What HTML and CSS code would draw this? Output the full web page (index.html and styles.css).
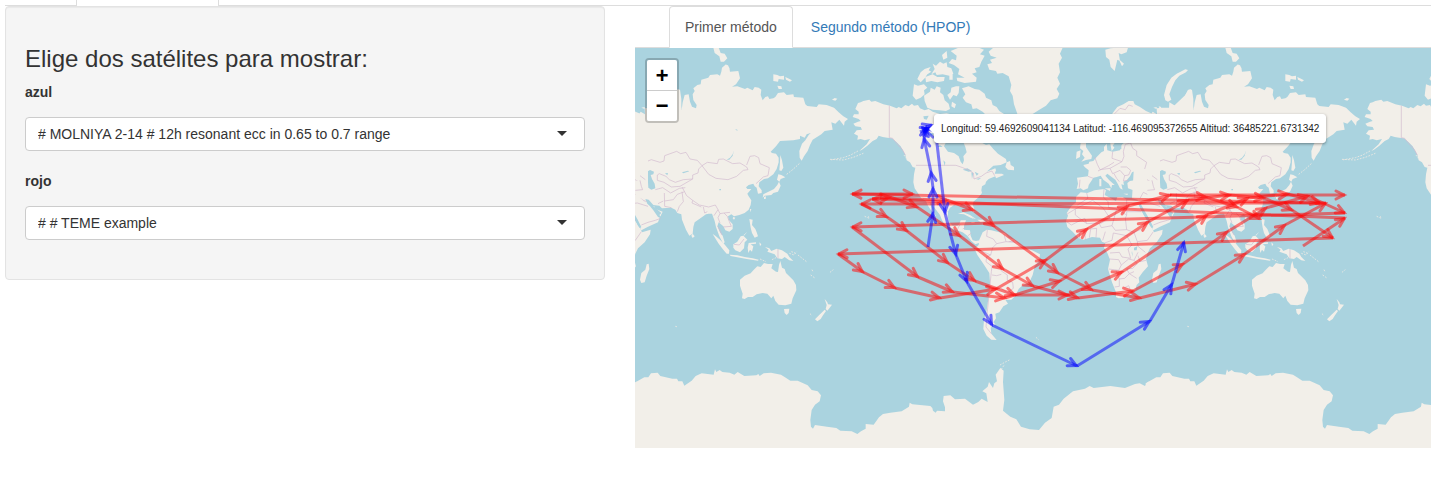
FILE: index.html
```html
<!DOCTYPE html>
<html lang="es">
<head>
<meta charset="utf-8">
<meta name="viewport" content="width=device-width, initial-scale=1">
<title>Satélites</title>
<link rel="stylesheet" href="styles.css">
</head>
<body>
<div class="page">
  <div class="top-tabs"><div class="top-tab"></div></div>
  <main class="layout">
    <form class="well">
      <h3 class="title">Elige dos satélites para mostrar:</h3>
      <div class="field">
        <label for="azul">azul</label>
        <div class="select-box"><select id="azul"><option># MOLNIYA 2-14 # 12h resonant ecc in 0.65 to 0.7 range</option></select></div>
      </div>
      <div class="field">
        <label for="rojo">rojo</label>
        <div class="select-box"><select id="rojo"><option># # TEME example</option></select></div>
      </div>
    </form>
    <section class="viewer">
      <nav class="tabs">
        <a class="tab active" href="#primer">Primer método</a>
        <a class="tab" href="#segundo">Segundo método (HPOP)</a>
      </nav>
      <div class="map" id="primer">
        <svg class="map-canvas" viewBox="635 48 796 400" preserveAspectRatio="xMinYMin slice" aria-hidden="true">
          <defs>
            <marker id="head-red" class="head red" markerUnits="userSpaceOnUse" markerWidth="16" markerHeight="16" refX="12" refY="8" orient="auto"><path d="M3 4L11 8 3 12"/></marker>
            <marker id="head-blue" class="head blue" markerUnits="userSpaceOnUse" markerWidth="16" markerHeight="16" refX="12" refY="8" orient="auto"><path d="M3 4L11 8 3 12"/></marker>
            <g id="world">
              <!-- Asia and Oceania -->
              <g transform="translate(1142 45) scale(.33333)">
                <path class="land" d="M-30 215L0 218 18 205 22 215 32 200 45 208 44 190 60 188 90 188 130 150 140 135 146 132 150 165 155 195 158 172 164 150 176 148 180 170 186 185 198 190 200 180 190 165 188 148 194 138 190 130 202 120 212 118 214 104 235 98 240 90 262 88 270 92 274 80 276 68 288 58 298 68 300 80 325 78 330 100 318 118 306 125 322 124 345 132 352 128 368 136 374 126 386 128 394 134 392 150 398 166 406 156 414 154 418 162 430 160 436 156 444 144 462 142 470 150 490 148 492 156 520 158 526 178 532 183 560 186 566 178 590 180 612 188 626 202 640 214 654 222 644 230 642 242 628 224 616 236 604 232 608 254 584 258 574 268 548 284 540 300 533 318 522 334 515 347 509 338 508 318 516 296 526 286 536 270 542 264 530 268 524 278 510 272 510 282 490 286 450 288 438 304 422 320 426 324 438 326 446 338 446 352 440 372 430 388 414 400 402 402 388 412 386 424 395 436 395 444 384 446 380 428 374 424 370 416 356 420 348 427 352 432 364 432 352 446 356 454 364 466 362 480 356 494 344 504 328 510 312 514 304 508 294 514 296 524 308 538 308 552 298 560 286 556 280 544 266 532 262 544 270 562 278 572 284 592 280 596 268 574 258 546 254 528 246 506 236 506 228 508 208 522 194 532 190 546 188 566 178 572 168 554 156 524 154 508 142 504 136 494 124 488 96 490 88 482 70 480 56 464 46 462 52 476 66 490 72 482 76 492 98 500 90 516 72 528 50 540 32 550 28 532 16 508 4 482-8 466-30 460-20 300Z"/>
                <path class="land" d="M250 8H266L272 24 284 26 292 40 282 50 272 50 268 34 254 24ZM282 64L294 60 298 72 284 74ZM430 88L442 90 450 94 462 92 462 104 446 102 444 110 430 108ZM466 96L474 100 486 106 480 110 468 104ZM442 122L454 124 456 132 446 132ZM606 164L614 159 622 161 616 167ZM451 330L456 346 460 368 454 378 448 376 450 350ZM445 388L454 390 466 397 452 402 448 410 441 404ZM447 410L452 422 444 440 430 444 424 450 404 452 398 458 400 448 420 438 432 432 442 420ZM402 456L408 454 407 462 402 462ZM188 566L194 574 188 579 184 572ZM360 492L364 492 361 502ZM310 516L316 518 312 524 308 520ZM358 522L368 524 366 540 376 552 380 562 384 574 374 578 366 564 362 548ZM352 560L342 572 341 570ZM248 567L256 572 270 584 282 596 298 616 297 626 290 626 278 612 266 596ZM299 629L322 631 344 636 368 640 386 644 384 647 350 642 302 633ZM310 598L322 590 332 574 340 572 352 584 344 592 342 610 330 622 316 616 310 608ZM356 594L378 592 378 596 362 598 370 604 366 620 360 614 355 624 353 608ZM405 606L418 610 424 618 440 611 456 616 472 626 478 636 490 648 478 646 464 636 456 642 442 640 434 628 412 620 416 614ZM388 592L394 598 390 604Z"/>
                <path class="land" d="M330 704L344 692 362 685 370 676 382 664 392 666 402 654 414 657 428 657 424 670 438 680 444 681 447 660 451 648 456 668 464 672 468 684 478 694 490 706 498 720 499 736 488 760 484 776 466 781 446 779 436 768 430 752 424 760 412 746 398 744 380 748 368 756 354 756 344 762 336 760 338 746 330 722ZM462 792L478 791 476 804 470 810 464 804ZM584 762L592 772 594 778 606 779 598 790 592 797 587 792 590 780ZM584 794L588 798 578 812 572 822 562 829 555 823 570 808Z"/>
                <path class="isle" d="M478 625L492 630 500 620M484 620L496 624M504 630L532 652M542 690L556 700M546 674L550 682M600 682L610 674M390 642L408 650M426 644L438 638M470 388L488 374 510 354M600 343L640 345 670 337 700 325M714 514L720 520M136 844L144 846M540 806L546 812"/>
                <path class="water" d="M50 381L60 375 72 380 70 388 62 390 66 402 74 416 76 430 64 434 55 428 54 412 46 400ZM290 344L300 338 308 328 312 316 308 332 298 344ZM156 382L174 377 178 379 160 385ZM105 385L114 384 112 391ZM315 252L322 254 322 258ZM268 432H273V436H268Z"/>
                <path class="border" d="M44 368L44 352 64 344 90 352 102 348 104 332 140 319 152 326 168 322 180 342 202 346 216 362 206 372 204 384 188 390 188 402 160 404 136 412 118 404 108 394 88 386 82 390 82 406 102 412 124 426 150 424 188 402M216 362L232 352 262 356 266 343 280 342 308 356 330 354 350 366 354 374 340 376 320 394 294 404 258 400 236 388 216 362M350 360L360 334 374 332 386 338 390 356 418 368 414 392 400 396 378 416M76 434L98 428 122 444 148 430 166 428M103 444L104 484 124 488M104 468L130 464 142 448 164 440M142 500L148 484 160 470 156 440M156 426L170 452 188 466 208 480 236 486 256 480 264 494 252 512M188 466L186 474 214 486M220 486L224 504 232 500M264 494L270 506 282 504 292 514 298 530 304 544 280 546M270 506L264 518 270 534M282 504L300 502M15 440L34 462 44 472M15 404L30 412 44 418M15 432L28 428 36 410M28 534L48 526 76 520 82 508M30 462L50 470M84 476L100 468M444 612V640M312 598L328 600 342 582M264 544L276 570"/>
              </g>
              <!-- Europe and Africa -->
              <g transform="translate(1060 45) scale(.33333)">
                <path class="land" d="M152 220L158 204 172 186 190 178 206 168 220 168 224 178 240 186 258 198 290 212 300 220V460L262 458 258 434 244 430 232 438 216 434 204 430 202 414 210 408 224 406 240 404 256 408 276 406 266 394 252 388 244 384 234 388 226 378 216 382 210 394 200 406 190 410 192 420 184 418 188 434 180 430 174 418 166 404 150 392 142 386 136 392 148 406 164 420 156 420 154 430 146 416 130 404 122 392 110 396 100 398 94 408 86 420 84 430 70 436 62 430 50 432 54 416 51 398 84 394 86 376 74 366 70 360 86 356 88 350 100 348 110 336 124 322 132 318 132 306 140 296 142 316 158 320 180 316 184 300 196 290 140 280ZM155 318L150 290H176L162 310ZM280 188L290 186 290 192ZM296 184L304 186 300 194Z"/>
                <path class="land" d="M316 166L312 150 320 120 334 98 350 86 376 73 384 75 378 82 358 92 346 106 336 126 328 148 334 164 324 170ZM136 14L152 10 170 8 204 8 200 22 184 28 176 24 180 48 172 44 164 78 152 66 148 44 138 36ZM176 42L192 56 186 64ZM328 172L348 184 352 190 372 196 376 207H326ZM374 190L376 150 384 134 396 134 400 162 400 207H376ZM62 294H78L78 306 86 318 96 332 94 342 78 345 64 350 74 338 66 328 70 318 60 310ZM50 320L62 316 60 336 48 342ZM134 430L152 430 150 438ZM118 402H124V424H118ZM190 446H204L202 450ZM236 440L246 442 238 446Z"/>
                <path class="land" d="M62 442L82 444 104 436 132 432 138 436 134 450 150 458 168 468 172 456 188 456 200 464 222 466 236 468 242 476 240 488 250 506 262 524 270 542 278 552 282 562 308 554 306 568 290 592 270 610 262 626 258 642 264 664 248 682 236 698 238 712 230 720 226 734 210 750 192 758 176 760 168 756 168 742 156 712 144 672 150 644 142 624 132 608 136 594 126 590 120 578 96 576 70 584 56 580 38 560 22 546 18 528 24 512 20 504 34 484 48 472 48 456ZM296 658L302 656 304 672 296 692 290 712 280 714 276 704 280 684 292 674Z"/>
                <path class="land" d="M232 464L260 450 278 460 300 480 340 505 330 532 300 545 280 556 272 540 262 524 252 506Z"/>
                <path class="water" d="M222 608L232 604 230 616 222 616ZM216 618L219 636 215 624ZM158 302L164 294H184L184 312 170 314ZM340 504L334 510 344 522 330 516 316 496 306 484 316 484ZM236 480L242 476 254 498 268 522 280 546 276 550 262 528 250 508Z"/>
                <path class="border" d="M164 206L180 190 196 194 206 180 218 184M190 320L196 298 212 294 218 310 230 318 230 332 260 352 254 372M158 320L156 340 186 350 192 334 190 320M104 336L112 358 120 374 150 370 186 350M84 394L100 400M60 404L58 428M150 370L158 386 180 376 194 392 206 390 212 376 200 366 182 366M114 378L146 362 162 352M162 386L170 400 178 410M194 392L190 408 206 406M276 406L280 424 284 434 262 436M276 392L292 404M20 508L46 492 46 510 80 536M46 492L98 466M80 444L84 460 52 480M98 466L130 490 150 520 124 534 80 536 74 520 34 540 20 530M132 432L130 456 144 470 146 488 170 492 200 510V500H244M200 464V500M170 492L162 520 156 542 124 548 118 536M156 542L166 556 200 554 196 520 200 510M200 554L222 562 246 552 262 524M134 594L156 586 160 564 200 572 222 562 232 590 262 586 280 560M58 580L60 560 74 556 76 584M88 578L92 552 110 550 108 578M136 560L128 586M200 572L216 600 204 612 212 640 186 636 178 622 150 624M232 590L234 604 256 622M148 642L176 644 184 660 176 676 146 672M184 660L206 642 222 646 232 656 218 670 200 672M222 646L234 622M234 632L240 650 258 646M168 676L178 702 194 700 208 686 230 700M178 702L178 724 164 726M200 672L208 686 222 680M194 728L206 722 210 732M240 460L250 442 262 448M250 476L268 474 300 484M280 540L300 532 322 526 338 520"/>
              </g>
              <!-- The Americas and Greenland -->
              <g transform="translate(830 45) scale(.33333)">
                <path class="land" d="M84 174L92 172 100 168 118 164 124 170 136 168 160 178 180 182 200 190 206 186 214 190 226 180 236 184 246 176 252 182 264 180 270 190 284 196 296 192 308 200 330 207 350 205 370 210 370 290 348 292 342 304 354 320 372 324 386 334 392 350 398 358 402 346 400 334 410 322 406 306 400 292 450 290 468 300 478 298 490 312 504 326 528 342 530 352 512 360 490 362 470 380 496 370 498 376 494 386 516 386 522 390 498 400 496 394 476 402 468 410 466 418 456 424 454 436 456 444 444 458 430 470 428 480 434 494 432 502 424 494 420 480 412 478 396 476 390 482 372 480 360 488 354 500 354 518 358 532 368 542 382 542 388 538 392 526 408 526 402 542 402 554 420 556 422 572 428 586 438 588 450 586 452 592 436 598 424 588 412 572 398 562 380 556 362 548 346 540 336 526 330 510 318 494 310 484 302 472 300 478 308 494 318 514 312 510 302 494 294 482 288 468 274 460 266 448 254 430 250 412 252 388 256 368 248 366 240 352 230 346 226 330 220 318 212 304 200 292 186 280 172 278 158 276 146 272 140 282 128 288 112 302 96 314 88 318 110 298 120 282 104 286 92 282 82 284 84 272 72 266 80 256 96 254 92 246 76 244 70 236 84 230 92 228 86 222 68 216 72 208 86 208 86 200 76 192Z"/>
                <path class="land" d="M526 366L530 352 540 348 542 360 552 366 552 376 534 374ZM384 506L400 502 420 510 438 522 422 518 402 508ZM442 524L458 524 466 530 452 532ZM424 531H434V534H424ZM470 529H478V532H470ZM482 32L476 20 490 8H698L690 26 696 38 686 56 690 82 682 98 690 116 680 132 688 146 682 160 662 166 648 182 628 194 608 207 600 240 580 250 564 212 552 178 548 152 540 138 544 120 536 94 518 84 502 86 498 78 478 74 472 58 486 54 480 44 500 38ZM362 18L386 8H446L462 14 450 28 464 32 454 50 448 66 434 70 440 82 426 86 440 98 438 110 404 114 382 108 380 98 404 98 384 88 388 72 372 60 356 54 366 42 378 46 380 32ZM308 56L318 62 330 50 340 56 350 52 352 66 364 70 370 86 358 92 338 88 320 90 316 82 304 88 314 72ZM262 102L272 82 284 72 302 66 296 76 304 80 292 88 284 100 272 112ZM286 96L308 88 322 96 344 96 342 108 322 112 304 108 288 112ZM252 118L264 122 282 118 292 128 282 136 284 148 272 158 258 164 248 152ZM284 168L282 152 300 140 302 128 314 134 320 124 332 128 330 142 340 150 344 166 356 176 360 192 348 198 328 196 308 194 292 188ZM358 84H368V104H358ZM364 128L378 124 388 124 386 144 380 154 370 150 360 164 352 150 362 142ZM366 170L378 178 374 190 364 184ZM396 130L416 124 434 132 448 134 464 146 468 158 484 166 488 180 500 186 508 198 522 207 500 218 470 212 458 200 440 190 428 192 424 178 408 172 398 158 406 148ZM336 30L350 18 352 38 340 44Z"/>
                <path class="land" d="M448 584L458 562 470 554 484 556 508 562 524 564 536 578 552 584 566 596 582 608 606 616 630 628 628 646 614 664 608 690 598 712 576 722 566 732 556 752 544 764 526 764 534 776 520 784 508 802 496 806 498 820 490 832 496 838 482 848 484 866 500 885 484 884 470 872 460 852 462 824 470 796 476 756 480 712 478 684 460 656 442 630 434 612 446 600Z"/>
                <path class="isle" d="M84 318L62 330 40 338 0 345M104 514L118 520M510 960L528 950 540 944M618 877L626 884M488 530L494 550M504 988L524 958M426 516L428 524M222 330L230 342"/>
                <path class="water" d="M398 374L412 370 426 378 416 380ZM424 382L430 384 426 402ZM434 380L446 386 440 392ZM438 402L454 398 446 404ZM322 306L330 300 338 306ZM340 346L346 352 344 364ZM296 266L320 262 304 272ZM280 214L296 212 290 224 282 222Z"/>
                <path class="border" d="M178 182V278L188 280 204 300 216 312 226 330M258 361H378L398 368 418 376 430 384 432 402 454 394 468 384 486 378 494 392M278 460L300 464 318 466 336 482 352 500M382 554L390 538M398 552L408 546M414 572L424 564M472 554L470 574 490 582 500 596 488 608 482 630 454 618 440 612M500 596L528 590 522 568M536 590L552 588M528 590L556 592M482 630L470 636 468 650 486 664 484 680 480 720 472 800 468 846 484 866M486 664L510 660 514 678 532 690 532 706 548 712 550 730 534 742M486 690L500 692 514 688M514 730L530 742 552 748"/>
              </g>
              <!-- Antarctica -->
              <g transform="translate(635 240) scale(.33333)">
                <path class="land" d="M-4 430L28 412 40 412 48 400 68 398 76 408 112 416 126 416 130 424 142 424 148 437 170 422 182 408 200 400 236 404 240 388 244 396 254 390 262 396 284 398 298 404 308 396 328 408 364 406 370 402 374 408 386 400 408 398 438 404 450 412 466 422 488 422 518 436 530 450 548 454 558 466 554 484 540 494 530 510 526 540 528 560 534 566 540 555 576 560 604 564 616 572 650 574 667 582 678 574 692 566 692 552 716 554 732 532 744 522 766 518 800 514 822 500 824 488 832 493 886 498 892 504 894 512 902 518 906 512 930 514 930 502 924 484 926 468 946 466 960 478 990 476 1014 494 1030 486 1040 476 1058 486 1054 460 1042 454 1058 440 1062 426 1074 444 1078 430 1086 424 1082 404 1096 384 1106 392 1104 426 1108 480 1104 512 1126 530 1144 538 1158 560 1184 568 1212 570 1230 548 1250 534 1256 500 1272 494 1286 476 1314 454 1350 446 1364 438 1376 444 1426 438 1470 444 1500 432 1514 430 1530 438 1540 424V630H-4Z"/>
              </g>
            </g>
          </defs>
          <rect class="sea" x="635" y="48" width="796" height="400"/>
          <use href="#world" x="-512"/><use href="#world"/><use href="#world" x="512"/>
          <g class="track red">
            <path d="M1303 246L1345 218"/><path d="M1345 218L872 199"/><path d="M872 199L890 197"/><path d="M890 197L917 207"/><path d="M917 207L960 236"/><path d="M960 236L1003 269"/><path d="M1003 269L1033 286"/><path d="M1033 286L1078 298"/><path d="M1078 298L1133 291"/><path d="M1133 291L1183 264"/><path d="M1183 264L1227 232"/><path d="M1227 232L1266 208"/><path d="M1266 208L1308 196"/><path d="M1308 196L1345 213"/>
            <path d="M1345 213L852 227"/><path d="M852 227L918 277"/><path d="M918 277L953 292"/><path d="M953 292L1005 298"/><path d="M1005 298L1060 281"/><path d="M1060 281L1148 222"/><path d="M1148 222L1188 200"/><path d="M1188 200L1230 195"/><path d="M1230 195L1264 198"/><path d="M1264 198L1292 210"/><path d="M1292 210L1333 238"/>
            <path d="M1333 238L838 254"/><path d="M838 254L863 272"/><path d="M863 272L895 288"/><path d="M895 288L940 298"/><path d="M940 298L996 289"/><path d="M996 289L1046 260"/><path d="M1046 260L1087 229"/><path d="M1087 229L1128 206"/><path d="M1128 206L1170 195"/><path d="M1170 195L1206 197"/><path d="M1206 197L1237 207"/><path d="M1237 207L1260 219"/>
            <path d="M1320 203L861 204"/><path d="M861 204L887 217"/><path d="M887 217L907 231"/><path d="M907 231L948 263"/><path d="M948 263L975 281"/><path d="M975 281L1015 295"/><path d="M1015 295L1068 295"/><path d="M1068 295L1122 272"/><path d="M1122 272L1207 215"/><path d="M1207 215L1248 198"/><path d="M1248 198L1288 194"/><path d="M1288 194L1320 203"/>
            <path d="M1326 203L852 194"/><path d="M852 194L913 194"/><path d="M880 198L947 200"/><path d="M947 200L973 210"/><path d="M973 210L994 226"/><path d="M994 226L1058 273"/><path d="M1058 273L1092 290"/><path d="M1092 290L1140 298"/><path d="M1140 298L1196 284"/><path d="M1196 284L1245 254"/><path d="M1245 254L1285 225"/><path d="M1285 225L1326 203"/><path d="M1170 195L1345 195"/>
          </g>
          <g class="track blue">
            <path d="M928 247L933 213"/><path d="M933 213L933 188"/><path d="M933 188L931 172"/><path d="M931 172L924 138"/><path d="M924 138L926 127"/><path d="M926 127L932 125"/><path d="M934 138L922 127"/><path d="M920 132L930 128"/><path d="M936 135L945 213"/><path d="M945 213L956 255"/><path d="M956 255L967 282"/><path d="M967 282L992 325"/><path d="M992 325L1077 366"/><path d="M1077 366L1150 321"/><path d="M1150 321L1172 284"/><path d="M1172 284L1184 242"/>
          </g>
        </svg>
        <div class="zoom-control">
          <button type="button" aria-label="Acercar">+</button>
          <button type="button" aria-label="Alejar">−</button>
        </div>
        <div class="tooltip" role="tooltip">Longitud: 59.4692609041134 Latitud: -116.469095372655 Altitud: 36485221.6731342</div>
      </div>
    </section>
  </main>
</div>
</body>
</html>
```
FILE: styles.css
```css
* { box-sizing: border-box; }
body {
  margin: 0;
  background: #fff;
  color: #333;
  font: 14px/20px "Liberation Sans", Arial, sans-serif;
}
.page { padding-left: 5px; }
.top-tabs {
  display: flex;
  height: 6px;
  padding-left: 71px;
  border-bottom: 1px solid #ddd;
}
.top-tab {
  width: 143px;
  height: 6px;
  background: #fff;
  border: solid #ddd;
  border-width: 0 1px;
}
.layout {
  display: grid;
  grid-template-columns: minmax(0, 600px) minmax(0, 1fr);
  gap: 30px;
  align-items: start;
}
.well {
  padding: 39px 19px;
  background: #f5f5f5;
  border: 1px solid #e3e3e3;
  border-radius: 4px;
  box-shadow: inset 0 1px 1px rgba(0, 0, 0, .05);
}
.title {
  margin: 0 0 10px;
  font-size: 24px;
  font-weight: 400;
  line-height: 26px;
}
.field + .field { margin-top: 20px; }
.field label {
  display: block;
  margin-bottom: 15px;
  font-weight: 700;
}
.select-box { position: relative; }
.select-box::after {
  content: "";
  position: absolute;
  top: 14px;
  right: 18px;
  border: 5px solid transparent;
  border-top-color: #333;
  border-bottom: 0;
  pointer-events: none;
}
.select-box select {
  display: block;
  width: 100%;
  height: 34px;
  padding: 0 30px 0 12px;
  appearance: none;
  background: #fff;
  border: 1px solid #ccc;
  border-radius: 4px;
  color: #333;
  font: inherit;
}
.tabs {
  display: flex;
  gap: 2px;
  height: 42px;
  padding-left: 34px;
  border-bottom: 1px solid #ddd;
}
.tab {
  height: 42px;
  padding: 10px 15px;
  border: 1px solid transparent;
  border-radius: 4px 4px 0 0;
  color: #337ab7;
  text-decoration: none;
}
.tab.active {
  background: #fff;
  border-color: #ddd #ddd #fff;
  color: #555;
}
.map {
  position: relative;
  height: 400px;
  overflow: hidden;
  background: #aad3df;
}
.map-canvas { display: block; width: 100%; height: 100%; }
.sea, .water { fill: #aad3df; }
.land { fill: #f2efe9; }
.isle { fill: none; stroke: #e4e6e2; stroke-width: 3; stroke-dasharray: 5 4; }
.border { fill: none; stroke: #d2b9cf; stroke-width: 2; }
.track path { fill: none; stroke-width: 3; stroke-opacity: .5; stroke-linecap: butt; }
.track.red path { stroke: #f00; marker-end: url(#head-red); }
.track.blue path { stroke: #00f; marker-end: url(#head-blue); }
.head path { fill: none; stroke-width: 3; stroke-opacity: .55; stroke-linecap: round; }
.head.red path { stroke: #f11; }
.head.blue path { stroke: #00f; }
.zoom-control {
  position: absolute;
  top: 10px;
  left: 10px;
  width: 34px;
  border: 2px solid rgba(0, 0, 0, .2);
  border-radius: 4px;
}
.zoom-control button {
  display: block;
  width: 30px;
  height: 30px;
  padding: 3px 0 0;
  background: #fff;
  border: 0;
  color: #000;
  font: bold 22px/27px "Liberation Mono", monospace;
}
.zoom-control button:first-child {
  height: 31px;
  padding-top: 4px;
  border-bottom: 1px solid #ccc;
  border-radius: 2px 2px 0 0;
}
.zoom-control button:last-child { border-radius: 0 0 2px 2px; }
.tooltip {
  position: absolute;
  top: 66px;
  left: 299px;
  padding: 6px;
  background: #fff;
  border: 1px solid #fff;
  border-radius: 3px;
  box-shadow: 0 1px 3px rgba(0, 0, 0, .4);
  color: #222;
  font-size: 10px;
  line-height: 15px;
  white-space: nowrap;
}
.tooltip::before {
  content: "";
  position: absolute;
  top: 8px;
  left: -6px;
  border: 6px solid transparent;
  border-right-color: #fff;
  border-left: 0;
}
```
